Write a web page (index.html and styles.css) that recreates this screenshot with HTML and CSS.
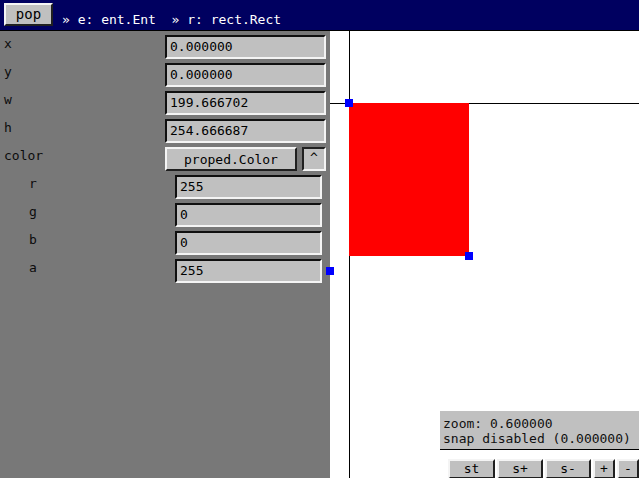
FILE: index.html
```html
<!DOCTYPE html>
<html>
<head>
<meta charset="utf-8">
<link rel="stylesheet" href="styles.css">
</head>
<body>
<div class="app">
  <header class="topbar">
    <button class="btn raised pop">pop</button>
    <nav class="crumbs"><span class="crumb">» e: ent.Ent</span><span class="crumb">» r: rect.Rect</span></nav>
  </header>
  <main class="main">
    <aside class="panel">
      <div class="row"><span class="label">x</span><span class="field">0.000000</span></div>
      <div class="row"><span class="label">y</span><span class="field">0.000000</span></div>
      <div class="row"><span class="label">w</span><span class="field">199.666702</span></div>
      <div class="row"><span class="label">h</span><span class="field">254.666687</span></div>
      <div class="row"><span class="label">color</span><span class="color-ctrl"><button class="btn raised type-btn">proped.Color</button><button class="btn sunken toggle">^</button></span></div>
      <div class="row sub"><span class="label">r</span><span class="field">255</span></div>
      <div class="row sub"><span class="label">g</span><span class="field">0</span></div>
      <div class="row sub"><span class="label">b</span><span class="field">0</span></div>
      <div class="row sub"><span class="label">a</span><span class="field">255</span></div>
    </aside>
    <section class="canvas">
      <div class="axis axis-v"></div>
      <div class="axis axis-h"></div>
      <div class="shape"></div>
      <span class="handle handle-tl"></span>
      <span class="handle handle-br"></span>
      <span class="handle handle-a"></span>
      <div class="hud">
        <div class="info">
          <div>zoom: 0.600000</div>
          <div>snap disabled (0.000000)</div>
        </div>
        <div class="tools">
          <button class="btn raised tool w-st">st</button>
          <button class="btn raised tool w-s">s+</button>
          <button class="btn raised tool w-s">s-</button>
          <button class="btn raised tool w-pm">+</button>
          <button class="btn raised tool w-pm">-</button>
        </div>
      </div>
    </section>
  </main>
</div>
</body>
</html>
```

FILE: styles.css
```css
* { box-sizing: border-box; }
html, body { margin: 0; padding: 0; }
body {
  width: 639px;
  height: 478px;
  overflow: hidden;
  font-family: "DejaVu Sans Mono", "Liberation Mono", monospace;
  font-size: 13px;
  color: #000;
  background: #fff;
}
.app {
  display: flex;
  flex-direction: column;
  width: 639px;
  height: 478px;
}
.topbar {
  height: 31px;
  flex: none;
  background: #000060;
  border-bottom: 1px solid #000;
  display: flex;
  align-items: flex-start;
  padding: 3px 0 0 4px;
}
.btn {
  font-family: "DejaVu Sans Mono", "Liberation Mono", monospace;
  font-size: 13px;
  color: #000;
  background: #c0c0c0;
  margin: 0;
  padding: 0;
  border-style: solid;
  border-width: 2px;
  display: flex;
  align-items: center;
  justify-content: center;
  cursor: default;
}
.raised { border-color: #f4f4f4 #202020 #202020 #f4f4f4; }
.sunken { border-color: #202020 #f4f4f4 #f4f4f4 #202020; }
.pop {
  width: 49px;
  height: 23px;
  font-size: 14px;
  padding-bottom: 2px;
}
.crumbs {
  display: flex;
  color: #fff;
  margin-left: 9px;
  padding-top: 9px;
  line-height: 16px;
  white-space: pre;
}
.crumb { margin-right: 15.6px; }
.main {
  flex: 1;
  display: flex;
  min-height: 0;
}
.panel {
  width: 330px;
  flex: none;
  background: #787878;
  padding: 4px 4px 0 4px;
  display: flex;
  flex-direction: column;
  gap: 4px;
}
.row {
  height: 24px;
  display: flex;
  align-items: flex-start;
  justify-content: space-between;
}
.label {
  line-height: 18px;
  color: #0c0c0c;
}
.field {
  width: 161px;
  height: 24px;
  background: #c0c0c0;
  border-style: solid;
  border-width: 2px;
  border-color: #101010 #f4f4f4 #f4f4f4 #101010;
  padding-left: 3px;
  line-height: 20px;
}
.row.sub { padding-left: 25px; padding-right: 4px; }
.row.sub .field { width: 147px; padding-left: 3px; }
.color-ctrl {
  display: flex;
  gap: 5px;
}
.type-btn { width: 132px; height: 24px; }
.toggle { width: 24px; height: 24px; padding-bottom: 4px; }
.canvas {
  flex: 1;
  position: relative;
  background: #fff;
}
.axis { position: absolute; background: #000; }
.axis-v { left: 19px; top: 0; bottom: 0; width: 1px; }
.axis-h { left: 0; right: 0; top: 72px; height: 1px; }
.shape {
  position: absolute;
  left: 19px;
  top: 72px;
  width: 120px;
  height: 153px;
  background: #ff0000;
}
.handle {
  position: absolute;
  width: 8px;
  height: 8px;
  background: #0000ff;
}
.handle-tl { left: 15px; top: 68px; }
.handle-br { left: 135px; top: 221px; }
.handle-a { left: -4px; top: 236px; }
.hud {
  position: absolute;
  right: 0;
  bottom: -1px;
  display: flex;
  flex-direction: column;
  align-items: flex-end;
}
.info {
  width: 199px;
  height: 39px;
  background: #c0c0c0;
  border-bottom: 1px solid #000;
  padding: 5px 0 0 3px;
  line-height: 15px;
  color: #101010;
}
.tools {
  display: flex;
  gap: 2px;
  margin-top: 9px;
}
.tool { height: 20px; padding-bottom: 1px; }
.w-st { width: 47px; }
.w-s { width: 46px; }
.w-pm { width: 22px; }
```
